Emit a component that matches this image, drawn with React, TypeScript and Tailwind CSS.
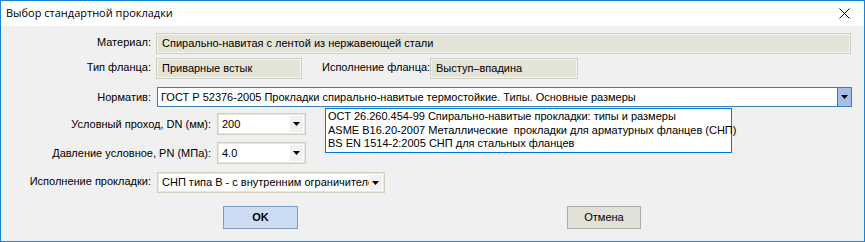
import React from 'react';

const font = { fontFamily: '"Liberation Sans", Arial, sans-serif' };

const Arrow = () => (
    <svg width="7" height="4" viewBox="0 0 7 4" className="block">
        <path d="M0 0h7L3.5 4z" fill="#000" />
    </svg>
);

const ReadonlyField: React.FC<{ value: string; className?: string }> = ({ value, className = '' }) => (
    <div className={`h-[21px] bg-[#e3e3d8] border border-[#cdcdc1] shadow-[inset_0_0_0_1px_#f6f6ef] flex items-center pl-[5px] text-[11px] text-black whitespace-nowrap overflow-hidden ${className}`}>
        {value}
    </div>
);

const Select: React.FC<{ value: string; className?: string }> = ({ value, className = '' }) => (
    <div className={`bg-white border border-[#cfcfc0] shadow-[inset_0_0_0_1px_#e6e6da] flex items-stretch text-[11px] text-black p-[2px] ${className}`}>
        <div className="flex-1 min-w-0 flex items-center pl-[2px] whitespace-nowrap overflow-hidden">{value}</div>
        <div className="w-[13px] bg-[#f0f0f0] flex items-center justify-center shrink-0">
            <Arrow />
        </div>
    </div>
);

export default function App() {
    return (
        <div className="w-[865px] h-[242px] border border-[#1883d7] bg-[#f0f0f0] flex flex-col overflow-hidden" style={font}>
            {/* title bar */}
            <div className="h-[25px] bg-white flex items-center justify-between pl-[5px] pr-[14px] shrink-0">
                <span className="text-[11px] text-black" style={{ fontFamily: '"Open Sans", "Noto Sans", sans-serif' }}>
                    Выбор стандартной прокладки
                </span>
                <svg width="11" height="11" viewBox="0 0 11 11">
                    <path d="M0.5 0.5l10 10M10.5 0.5l-10 10" stroke="#000" strokeWidth="1" />
                </svg>
            </div>

            <div className="relative flex-1 flex flex-col text-[11px] text-black">
                {/* Материал */}
                <div className="flex items-center mt-[7px]">
                    <div className="w-[151px] text-right pr-[1px] -mt-[3px]">Материал:</div>
                    <ReadonlyField value="Спирально-навитая с лентой из нержавеющей стали" className="ml-[4px] w-[695px]" />
                </div>

                {/* Тип фланца */}
                <div className="flex items-center mt-[4px]">
                    <div className="w-[151px] text-right pr-[1px] -mt-[3px]">Тип фланца:</div>
                    <ReadonlyField value="Приварные встык" className="ml-[4px] w-[146px]" />
                    <div className="ml-[20px] w-[106px] -mt-[3px] whitespace-nowrap">Исполнение фланца:</div>
                    <ReadonlyField value="Выступ–впадина" className="ml-[2px] w-[148px]" />
                </div>

                {/* Норматив */}
                <div className="flex items-center mt-[8px]">
                    <div className="w-[151px] text-right pr-[1px]">Норматив:</div>
                    <div className="ml-[5px] w-[695px] h-[20px] bg-white border border-[#3c7fb1] flex items-stretch">
                        <div className="flex-1 flex items-center pl-[3px] whitespace-nowrap overflow-hidden">
                            ГОСТ Р 52376-2005 Прокладки спирально-навитые термостойкие. Типы. Основные размеры
                        </div>
                        <div className="w-[14px] bg-[#a6bfe8] border-l border-[#3c6fb1] flex items-center justify-center">
                            <Arrow />
                        </div>
                    </div>
                </div>

                {/* DN */}
                <div className="flex items-start mt-[6px]">
                    <div className="w-[210px] text-right pt-[3px]">Условный проход, DN (мм):</div>
                    <Select value="200" className="ml-[6px] w-[89px] h-[22px]" />
                </div>

                {/* PN */}
                <div className="flex items-start mt-[7px]">
                    <div className="w-[210px] text-right pt-[3px]">Давление условное, PN (МПа):</div>
                    <Select value="4.0" className="ml-[6px] w-[89px] h-[22px]" />
                </div>

                {/* Исполнение прокладки */}
                <div className="flex items-center mt-[8px]">
                    <div className="w-[151px] text-right pr-[1px] -mt-[3px]">Исполнение прокладки:</div>
                    <Select value="СНП типа В - с внутренним ограничителем" className="ml-[5px] w-[228px] h-[21px]" />
                </div>

                {/* buttons */}
                <div className="flex mt-[13px]">
                    <button className="ml-[222px] w-[75px] h-[23px] bg-[#ccdcf2] border border-[#7a9ccc] font-bold text-[11px]">
                        OK
                    </button>
                    <button className="ml-[269px] w-[74px] h-[23px] bg-[#e1e1d8] border border-[#adada4] text-[11px]">
                        Отмена
                    </button>
                </div>

                {/* dropdown list of Норматив */}
                <div className="absolute left-[324px] top-[82px] w-[407px] bg-white border border-[#0078d7] pl-[2px] py-[1px] leading-[13.5px] whitespace-nowrap">
                    <div>ОСТ 26.260.454-99 Спирально-навитые прокладки: типы и размеры</div>
                    <div>ASME B16.20-2007 Металлические&nbsp; прокладки для арматурных фланцев (СНП)</div>
                    <div>BS EN 1514-2:2005 СНП для стальных фланцев</div>
                </div>
            </div>
        </div>
    );
}
